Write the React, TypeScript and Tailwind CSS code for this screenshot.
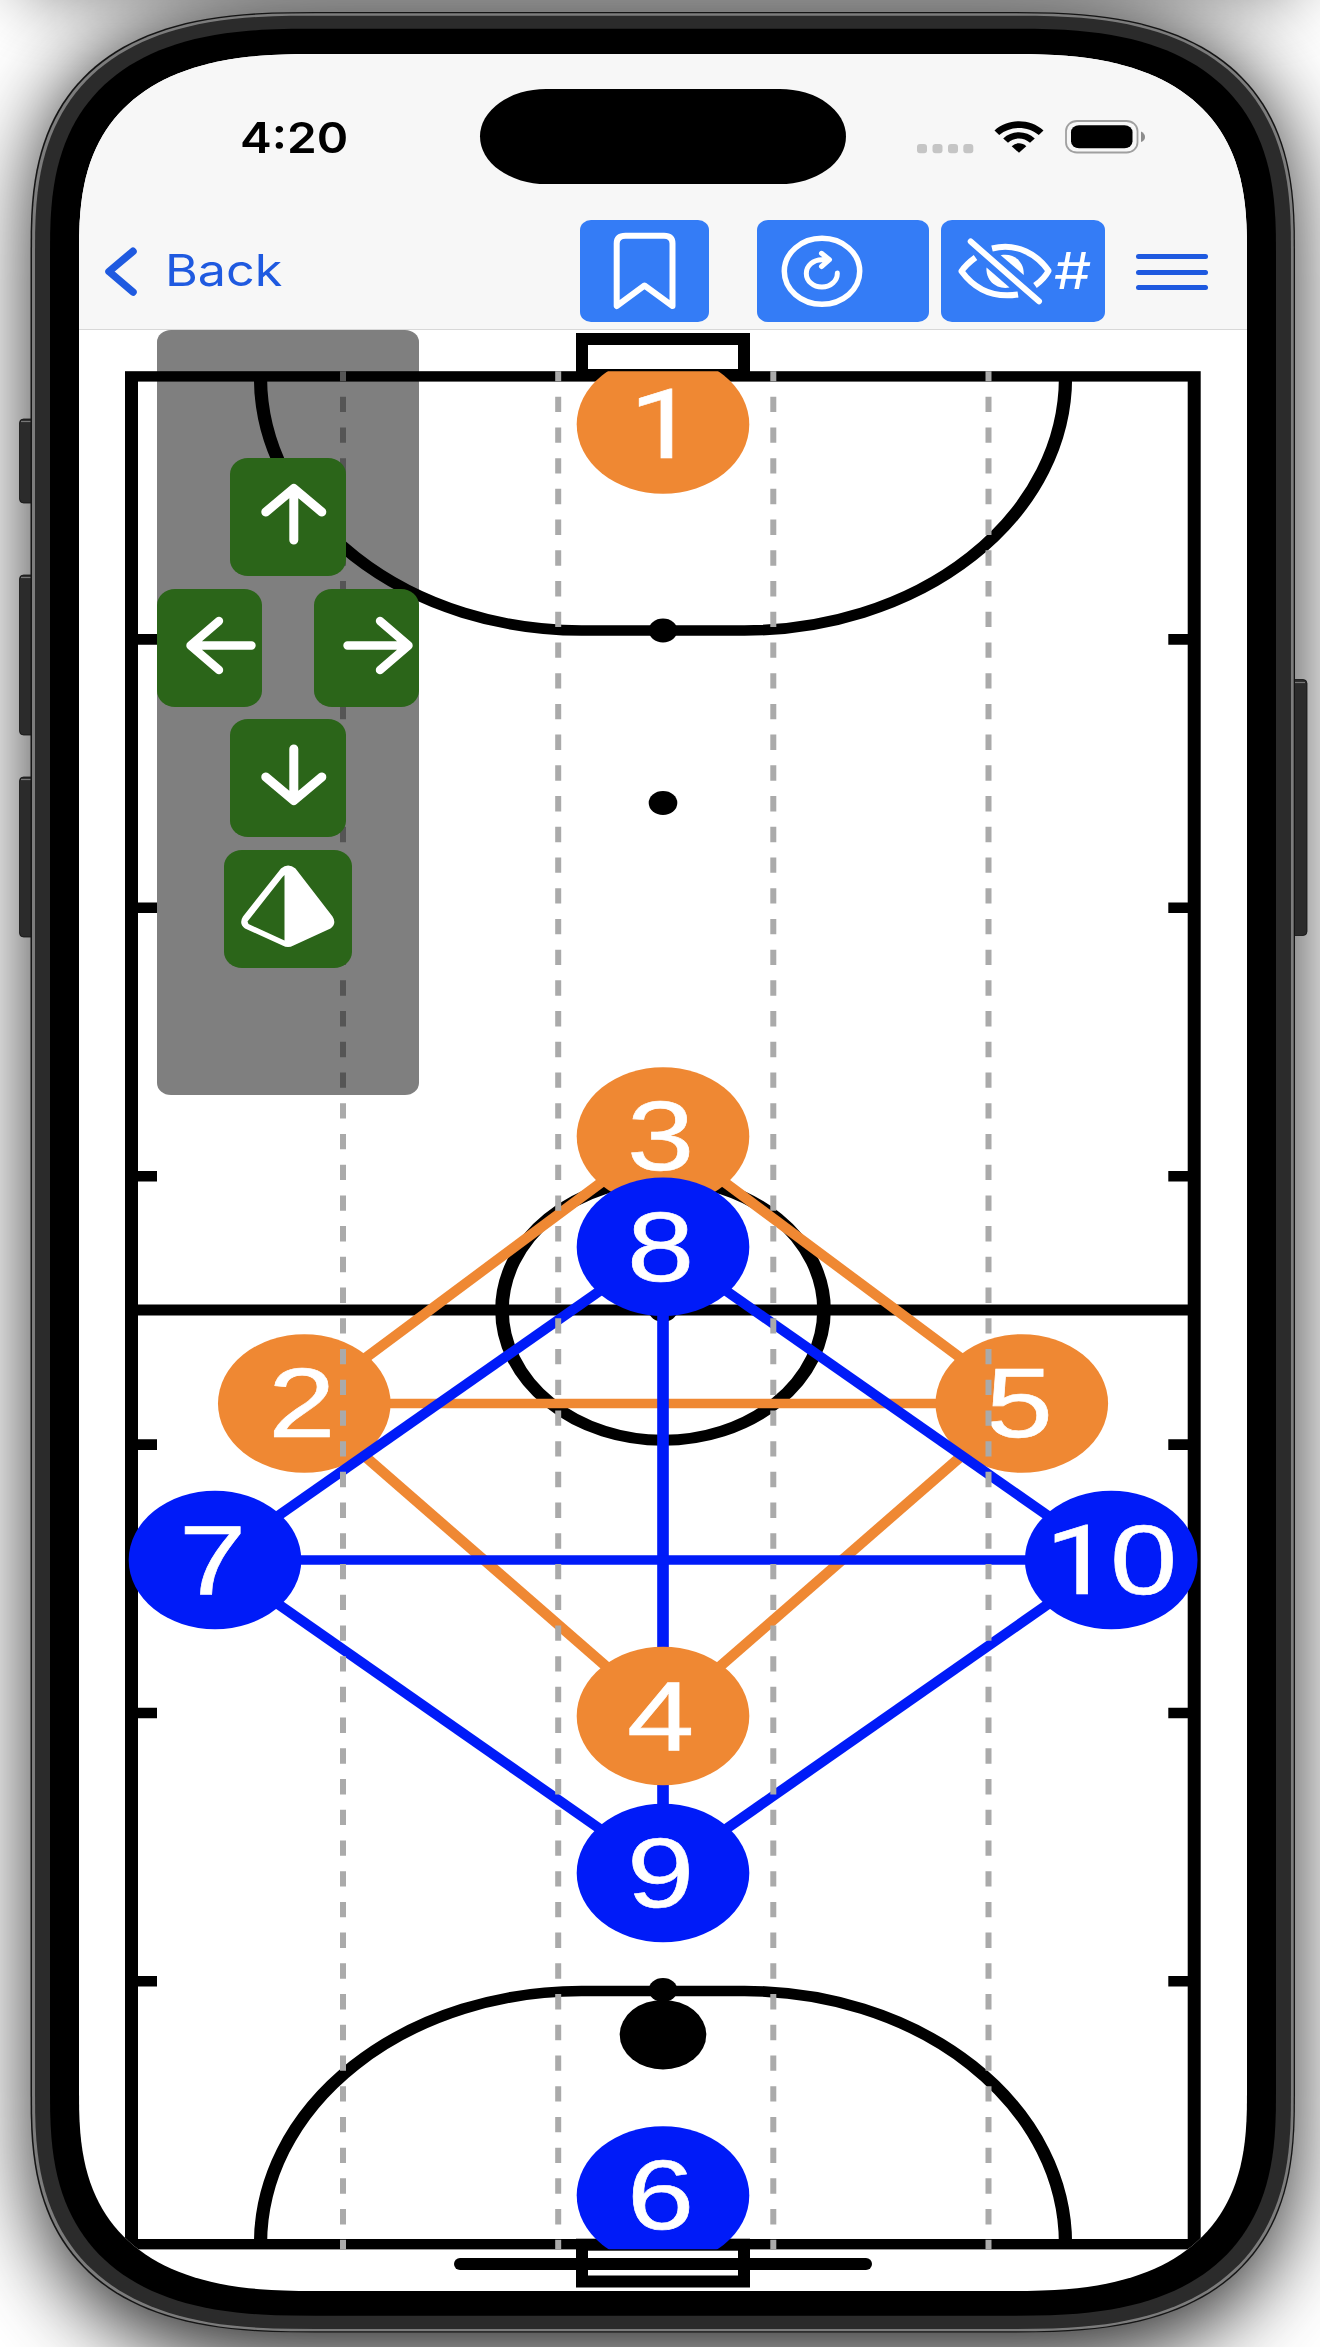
import React from "react";

const ORANGE = "#ef8833";
const BLUE = "#001bf8";

/** Closed path of a box whose corners follow a superellipse. */
function squircle(x: number, y: number, w: number, h: number, rx: number, ry: number, n = 2.7) {
  const pts: string[] = [];
  const steps = 40;
  const corners = [
    [x + w - rx, y + ry, 1, -1, 0],
    [x + w - rx, y + h - ry, 1, 1, 1],
    [x + rx, y + h - ry, -1, 1, 0],
    [x + rx, y + ry, -1, -1, 1],
  ];
  for (const [cx, cy, sx, sy, flip] of corners) {
    for (let i = 0; i <= steps; i++) {
      const t = ((flip ? steps - i : i) / steps) * (Math.PI / 2);
      const px = cx + sx * rx * Math.pow(Math.abs(Math.sin(t)), 2 / n);
      const py = cy + sy * ry * Math.pow(Math.abs(Math.cos(t)), 2 / n);
      pts.push(px.toFixed(2) + " " + py.toFixed(2));
    }
  }
  return "M" + pts.join("L") + "Z";
}

type P = { n: number; x: number; y: number };
const orange: P[] = [
  { n: 1, x: 663, y: 424.5 },
  { n: 3, x: 663, y: 1136.5 },
  { n: 2, x: 304.3, y: 1403.5 },
  { n: 5, x: 1021.8, y: 1403.5 },
  { n: 4, x: 663, y: 1716 },
];
const blue: P[] = [
  { n: 8, x: 663, y: 1246.7 },
  { n: 7, x: 215, y: 1560 },
  { n: 10, x: 1111.2, y: 1560 },
  { n: 9, x: 663, y: 1873 },
  { n: 6, x: 663, y: 2195.5 },
];
const at = (n: number) => [...orange, ...blue].find((p) => p.n === n)!;

const K = 1.25;
const Stretch = ({ children }: { children: React.ReactNode }) => (
  <g transform={`scale(${K} 1)`}>{children}</g>
);

function Links({ pairs, color }: { pairs: number[][]; color: string }) {
  return (
    <Stretch>
      {pairs.map(([a, b]) => (
        <line key={a + "-" + b} x1={at(a).x / K} y1={at(a).y} x2={at(b).x / K} y2={at(b).y} stroke={color} strokeWidth="9.300" />
      ))}
    </Stretch>
  );
}

function Players({ list, color }: { list: P[]; color: string }) {
  return (
    <g>
      {list.map((p) => (
        <g key={p.n}>
          <ellipse cx={p.x} cy={p.y} rx="86.3" ry="69.3" fill={color} />
          <text
            transform={`translate(${p.n === 1 || p.n === 10 ? p.x : p.x - 2.5} ${p.y + 33.8}) scale(1.24 1)`}
            textAnchor="middle"
            fontSize="97.5"
            fill="#fff"
            stroke="#fff"
            strokeWidth=".6"
            className="font-['Liberation_Sans',sans-serif]"
          >
            {p.n === 1 || p.n === 10 ? (
              <tspan fontSize="96.500" className="font-['Roboto',sans-serif]">1</tspan>
            ) : (
              p.n
            )}
            {p.n === 10 && <tspan dx="-1.8">0</tspan>}
          </text>
        </g>
      ))}
    </g>
  );
}

function Field() {
  const cx = 663 / K;
  const ticks = [639.4, 907.8, 1176.2, 1444.6, 1713, 1981.3];
  return (
    <svg viewBox="79 330 1168 1961" className="absolute inset-0 h-[1961px] w-[1168px]">
      <defs>
        <clipPath id="pitch">
          <rect x="125" y="371.3" width="1075.7" height="1878" />
        </clipPath>
      </defs>
      <g fill="none" stroke="#000">
        <rect x="582" y="339" width="162" height="36" strokeWidth="12" />
        <rect x="582" y="2244.700" width="162" height="36.800" strokeWidth="12" />
        <Stretch>
          <rect x={131.5 / K} y="376.4" width={1062.7 / K} height="1867.8" strokeWidth="10.4" />
          <path strokeWidth="10.6" d={`M${cx - 402.5 / K} 378A${321 / K} 253 0 0 0 ${cx - 81.5 / K} 630.5H${cx + 81.5 / K}A${321 / K} 253 0 0 0 ${cx + 402.5 / K} 378`} />
          <path strokeWidth="10.6" d={`M${cx - 402.5 / K} 2244A${321 / K} 253 0 0 1 ${cx - 81.5 / K} 1991H${cx + 81.5 / K}A${321 / K} 253 0 0 1 ${cx + 402.5 / K} 2244`} />
          <ellipse cx={cx} cy="1310" rx={161 / K} ry="130.3" strokeWidth="10.9" />
          <line x1={131 / K} x2={1194 / K} y1="1310" y2="1310" strokeWidth="10.8" />
        </Stretch>
        {ticks.map((y) => (
          <path key={y} d={`M130 ${y}H157M1168.3 ${y}H1195`} strokeWidth="10.6" />
        ))}
      </g>
      {[630.5, 803, 1310, 1990].map((y) => (
        <ellipse key={y} cx="663" cy={y} rx="14.300" ry="11.9" />
      ))}
      <ellipse cx="663" cy="2034.7" rx="43.3" ry="34.8" />
      <g clipPath="url(#pitch)">
        <Links pairs={[[3, 2], [3, 5], [2, 5], [2, 4], [4, 5]]} color={ORANGE} />
        <Links pairs={[[8, 9]]} color={BLUE} />
        <Players list={orange} color={ORANGE} />
        <Links pairs={[[7, 8], [8, 10], [7, 10], [7, 9], [9, 10]]} color={BLUE} />
        <Players list={blue} color={BLUE} />
      </g>
      {[343, 558.2, 773.3, 988.5].map((x) => (
        <line key={x} x1={x} x2={x} y1="371.3" y2="2249.3" stroke="#aaa" strokeWidth="6" strokeDasharray="15.36 15.358" strokeDashoffset="5.3" />
      ))}
    </svg>
  );
}

function ControlPad() {
  const btn = "h-[118px] rounded-[18px/16px] bg-[#2b6519]";
  const stroke = { fill: "none", stroke: "#fff", strokeWidth: 9, strokeLinecap: "round", strokeLinejoin: "round" } as const;
  return (
    <div className="absolute left-[78px] top-0 flex h-[765px] w-[261.5px] flex-col items-center gap-[12.5px] rounded-[14px/12px] bg-black/50 pt-[128px]">
      <button className={btn + " w-[116px] shrink-0"}>
        <svg viewBox="0 0 116 118" className="h-full w-full" {...stroke}><path d="M63.8 82V30.500M35.800 54L63.800 30.500L91.800 54" /></svg>
      </button>
      <div className="flex w-full shrink-0 justify-between">
        <button className={btn + " w-[104.5px]"}>
          <svg viewBox="0 0 104.500 118" className="h-full w-full" {...{ ...stroke, strokeWidth: 8.4 }}><path d="M94.500 56.500H33.500M62 32L33.500 56.500L62 81" /></svg>
        </button>
        <button className={btn + " w-[104.5px]"}>
          <svg viewBox="0 0 104.500 118" className="h-full w-full" {...{ ...stroke, strokeWidth: 8.4 }}><path d="M33.500 56.500H94.500M66 32L94.500 56.500L66 81" /></svg>
        </button>
      </div>
      <button className={btn + " w-[116px] shrink-0"}>
        <svg viewBox="0 0 116 118" className="h-full w-full" {...stroke}><path d="M63.800 30V81M35.800 58L63.800 81.500L91.800 58" /></svg>
      </button>
      <button className={btn + " w-[128px] shrink-0"}>
        <svg viewBox="0 0 128 118" className="h-full w-full" fill="#fff">
          <path fillRule="evenodd" d="M57 18.500Q64 12.500 71.500 18.500L108.500 66.500Q113 73.500 106.500 78.500L69.500 95.500Q64 98.500 58.500 95.500L21 78.500Q14.500 73.500 19 66.500ZM60.500 25L58.500 27L23.500 71.500L24.500 74L60.500 90.500Z" />
        </svg>
      </button>
    </div>
  );
}

function StatusBar() {
  return (
    <div className="flex h-[130px] items-start">
      <div className="ml-[160.5px] mt-[57px] w-[241.5px]">
        <span className="inline-block origin-left scale-x-[1.11] text-[43px] leading-[52px] font-semibold text-black">4:20</span>
      </div>
      <div className="-ml-px mt-[35px] h-[95px] w-[366px] rounded-[66px/47.5px] bg-black" />
      <svg viewBox="910 115 240 45" className="ml-[64px] mt-[61px] h-[45px] w-[240px]">
        {[917, 932.500, 948, 963.300].map((x) => (
          <rect key={x} x={x} y="144" width="10" height="9.200" rx="3" fill="#c5c5c5" />
        ))}
        <g transform="translate(1019 0)">
          <path d="M-24.500 130.500C-11 118.300 11 118.300 24.500 130.500L19.800 135C8.500 125.500 -8.500 125.500 -19.800 135Z" />
          <path d="M-15.800 138.500C-7 130.300 7 130.300 15.800 138.500L11 142.700C4.500 137 -4.500 137 -11 142.700Z" />
          <path d="M-7.300 146.200C-3 142.400 3 142.400 7.300 146.200L0 152.800Z" />
        </g>
        <rect x="1066" y="121" width="71.500" height="31.500" rx="11" ry="10" fill="none" stroke="#a0a0a0" strokeWidth="1.800" />
        <rect x="1071" y="125.300" width="61.500" height="23" rx="8" ry="7" />
        <path d="M1141 131.500Q1145 133.500 1145 137Q1145 140.500 1141 142Z" fill="#8c8c8c" />
      </svg>
    </div>
  );
}

function NavBar() {
  const blueBtn = "h-[102px] shrink-0 rounded-[11px/10px] bg-[#347cf6]";
  return (
    <div className="flex h-[146px] items-start border-b border-[#d8d8d8] pt-[36px]">
      <button className="flex h-[102px] w-[501px] items-center">
        <svg viewBox="104 220 40 102" className="ml-[25px] h-[102px] w-[40px]" fill="none" stroke="#1f5ae0" strokeWidth="7.500" strokeLinecap="round" strokeLinejoin="round">
          <path d="M133 251.300L109 271.500L133 292" />
        </svg>
        <span className="-mt-[2px] ml-[20.5px] inline-block origin-left scale-x-[1.155] text-[43.5px] leading-[52px] text-[#1f5ae0]">Back</span>
      </button>
      <button className={blueBtn + " w-[129px]"}>
        <svg viewBox="580 220 129 102" className="h-full w-full" fill="none" stroke="#fff" strokeWidth="6" strokeLinecap="round" strokeLinejoin="round">
          <path d="M616.700 306V243.500Q616.700 235.800 625.500 235.800H664Q672.500 235.800 672.500 243.500V306L644.500 285.500Z" />
        </svg>
      </button>
      <button className={blueBtn + " ml-[48px] w-[172px]"}>
        <svg viewBox="757 220 172 102" className="h-full w-full" fill="none" stroke="#fff" strokeWidth="5" strokeLinecap="round" strokeLinejoin="round">
          <ellipse cx="822" cy="271.300" rx="37.700" ry="33" strokeWidth="5.500" />
          <path d="M837.300 273A15.500 13.700 0 1 1 822 259.700H829M821.500 253.300L829.500 259.700L821.500 266.500" />
        </svg>
      </button>
      <button className={blueBtn + " relative ml-[12px] w-[164px]"}>
        <svg viewBox="941 220 164 102" className="h-full w-full" fill="none" stroke="#fff" strokeWidth="6" strokeLinejoin="round">
          <path d="M970.700 241.500L1039 301.300" strokeLinecap="round" />
          <path d="M992 248.500C1018 242 1038 255.500 1048.500 270.800Q1044.500 278.500 1035 285.500" />
          <path d="M975.500 257.500Q966 264.500 961.500 271.200C973.500 287.500 992 298.500 1018 294.500" />
          <path d="M1000.700 255.200C1014 252.500 1024.500 262 1023.700 275Z" fill="#fff" stroke="none" />
          <path d="M986.500 267.500C985.500 281 997 290 1009.500 287.500Z" fill="#fff" stroke="none" />
        </svg>
        <span className="absolute left-[112.5px] top-[20.5px] inline-block origin-left scale-x-[1.18] text-[50px] leading-[60px] font-normal text-white">#</span>
      </button>
      <button className="ml-[31px] mt-[34px] flex w-[72px] flex-col gap-[10.6px]">
        <span className="h-[5px] w-full rounded-full bg-[#1f5ae0]" />
        <span className="h-[5px] w-full rounded-full bg-[#1f5ae0]" />
        <span className="h-[5px] w-full rounded-full bg-[#1f5ae0]" />
      </button>
    </div>
  );
}

function PhoneFrame() {
  return (
    <svg viewBox="0 0 1320 2347" className="absolute inset-0 h-[2347px] w-[1320px]">
      <defs>
        <filter id="soft" filterUnits="userSpaceOnUse" x="-300" y="-400" width="1920" height="3100">
          <feGaussianBlur stdDeviation="42" />
        </filter>
        <filter id="softTop" filterUnits="userSpaceOnUse" x="-200" y="-400" width="1720" height="800">
          <feGaussianBlur stdDeviation="34" />
        </filter>
      </defs>
      <path d={squircle(31, 10, 1264, 2352, 285, 245, 2.6)} fill="#000" opacity=".82" filter="url(#soft)" />
      <rect x="20" y="-200" width="1280" height="197" fill="#000" opacity=".45" filter="url(#softTop)" />
      {[[419, 84], [575, 160], [777, 160]].map(([y, h]) => (
        <g key={y}>
          <rect x="19.500" y={y} width="18" height={h} rx="4" fill="#2b2b2b" stroke="#111" strokeWidth=".8" />
          <path d={`M21 ${y + 2.500}H32`} stroke="#777" strokeWidth="1.200" />
        </g>
      ))}
      <rect x="1288" y="679.5" width="19" height="256" rx="4" fill="#2b2b2b" stroke="#111" strokeWidth=".8" />
      <path d="M1294 682.500H1305" stroke="#777" strokeWidth="1.200" />
      <path d={squircle(30.500, 12, 1264.500, 2320.500, 285, 240)} fill="#151515" />
      <path d={squircle(32, 13.300, 1261.700, 2318, 284, 239)} fill="#7c7c7c" />
      <path d={squircle(35, 15.700, 1256, 2313.300, 281, 237)} fill="#2b2b2b" />
      <path d={squircle(50, 28.700, 1226, 2287, 266, 225)} fill="#000" />
    </svg>
  );
}

export default function App() {
  return (
    <div className="relative h-[2347px] w-[1320px] overflow-hidden bg-white font-['Inter',sans-serif]">
      <PhoneFrame />
      <div
        className="relative ml-[79px] mt-[54px] flex h-[2237px] w-[1168px] flex-col overflow-hidden bg-white"
        style={{ clipPath: `path("${squircle(0, 0, 1168, 2237, 242, 200)}")` }}
      >
        <header className="h-[276px] shrink-0 bg-[#f7f7f7]">
          <StatusBar />
          <NavBar />
        </header>
        <main className="relative h-[1961px]">
          <Field />
          <ControlPad />
          <div className="absolute bottom-[21px] left-[374.5px] h-[12.5px] w-[418.5px] rounded-full bg-black" />
        </main>
      </div>
    </div>
  );
}
